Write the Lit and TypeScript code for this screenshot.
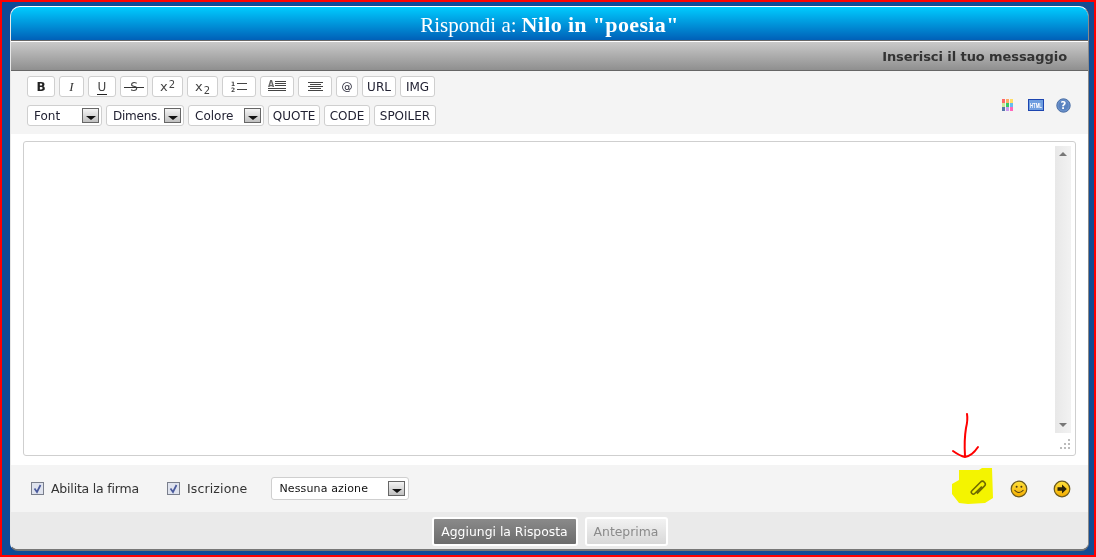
import { LitElement, html, css, svg } from "lit";
import { customElement } from "lit/decorators.js";

const tri = html`<span class="dd"><i></i></span>`;

const ico = (w: number, body: unknown) =>
  html`<svg width=${w} height="13" viewBox="0 0 ${w} 13">${body}</svg>`;

const row1 = [
  { w: 28, c: "b", t: "B" },
  { w: 25, c: "i", t: "I" },
  { w: 28, c: "u", t: html`<span class="ul">U</span>` },
  { w: 28, c: "s", t: html`<span class="st">S</span>` },
  { w: 31, c: "sc", t: html`<span>x<sup>2</sup></span>` },
  { w: 31, c: "sc", t: html`<span>x<sub>2</sub></span>` },
  {
    w: 34, c: "", t: ico(16, svg`<text x="0" y="6" font-size="6" font-weight="700" font-family="DejaVu Sans" fill="#444">1</text><text x="0" y="12" font-size="6" font-weight="700" font-family="DejaVu Sans" fill="#444">2</text><path d="M6 3.5h10M6 9.5h10" stroke="#444" fill="none"/>`),
  },
  {
    w: 34, c: "", t: ico(19, svg`<text x="0" y="7" font-size="8" font-weight="700" font-family="DejaVu Sans" fill="#666">A</text><path d="M7 1.5h11M7 3.5h11M7 5.5h11M0 8.5h18M0 10.5h18" stroke="#444" fill="none"/>`),
  },
  {
    w: 34, c: "", t: ico(15, svg`<path d="M0 2.5h15M2 4.5h11M0 6.5h15M2 8.5h11M0 10.5h15" stroke="#444" fill="none"/>`),
  },
  { w: 22, c: "at", t: "@" },
  { w: 34, c: "", t: "URL" },
  { w: 35, c: "", t: "IMG" },
];
const selects = [
  { w: 75, t: "Font", c: "" },
  { w: 78, t: "Dimens.", c: "tight" },
  { w: 76, t: "Colore", c: "" },
];
const row2 = [
  { w: 52, t: "QUOTE" },
  { w: 46, t: "CODE" },
  { w: 62, t: "SPOILER" },
];
const swatches = ["#f66", "#fa6", "#fd6", "#cdea9c", "#3c6", "#6be", "#57a", "#c9e", "#f6b"];

@customElement("app-root")
export class AppRoot extends LitElement {
  static styles = css`
    :host {
      display: block;
      width: 1096px;
      height: 557px;
      position: relative;
      overflow: hidden;
      box-sizing: border-box;
      border: 2px solid #f00;
      background: linear-gradient(90deg, #0f4a96, #10499a 50%, #134c92);
      padding: 4px 5px 4px 8px;
      font-family: "DejaVu Sans", Verdana, sans-serif;
      color: #222;
    }
    .panel {
      height: 545px;
      box-sizing: border-box;
      display: flex;
      flex-direction: column;
      border-radius: 10px 10px 8px 8px;
      overflow: hidden;
      border: 1px solid #fff;
      border-right-color: #8a8a8a;
      border-bottom: 2px solid #777;
      border-left-color: #e8e8e8;
      background: #fff;
    }
    .head {
      height: 33px;
      flex: none;
      box-sizing: border-box;
      display: flex;
      align-items: center;
      justify-content: center;
      gap: 5px;
      padding-top: 3px;
      background: linear-gradient(#00ccff, #0060b8);
      color: #fff;
      font-family: "Liberation Serif", serif;
      font-size: 21px;
      white-space: pre;
    }
    .head b {
      font-size: 22px;
      letter-spacing: 0.35px;
    }
    .sub {
      height: 31px;
      flex: none;
      box-sizing: border-box;
      border-top: 1px solid #666;
      border-bottom: 1px solid #666;
      box-shadow: inset 0 1px 0 #fff;
      background: linear-gradient(#cbcbcb, #8f8f8f);
      display: flex;
      align-items: center;
      justify-content: flex-end;
      padding: 2px 21px 0 0;
      font-size: 13px;
      font-weight: 700;
      letter-spacing: -0.08px;
      color: #333;
    }
    .tools {
      height: 63px;
      flex: none;
      box-sizing: border-box;
      background: #f4f4f4;
      padding: 5px 17px 0 16px;
      display: flex;
      justify-content: space-between;
    }
    .rows {
      display: flex;
      flex-direction: column;
      gap: 8px;
    }
    .row {
      display: flex;
      gap: 4px;
    }
    .btn {
      height: 21px;
      box-sizing: border-box;
      border: 1px solid #cfcfcf;
      border-radius: 3px;
      background: #fff;
      display: flex;
      align-items: center;
      justify-content: center;
      font-size: 12px;
      color: #223;
      line-height: 1;
      flex: none;
    }
    .btn.b { font-weight: 700; font-size: 12px; color: #222; }
    .btn.i { font-style: italic; font-family: "Liberation Serif", serif; font-size: 13px; color: #333; }
    .btn.at { font-size: 11px; }
    .btn.sc { font-size: 13px; color: #444; }
    .ul, .st {
      position: relative;
      display: block;
      color: #444;
    }
    .ul::after {
      content: "";
      position: absolute;
      left: -1px;
      right: -1px;
      bottom: -2px;
      border-top: 1px solid #222;
    }
    .st::after {
      content: "";
      position: absolute;
      left: -6px;
      right: -6px;
      top: 6px;
      border-top: 1px solid #333;
    }
    sup, sub { font-size: 10px; line-height: 0; margin-left: 1px; }
    sup { vertical-align: 3px; }
    sub { vertical-align: -3px; }
    .sel {
      justify-content: space-between;
      padding: 0 2px 0 6px;
    }
    .tight { letter-spacing: -0.25px; }
    .dd {
      width: 17px;
      height: 15px;
      box-sizing: border-box;
      border: 1px solid #666;
      background: linear-gradient(#f4f4f4, #c0c0c0);
      display: flex;
      align-items: flex-end;
      justify-content: center;
      padding-bottom: 2px;
      flex: none;
    }
    .dd i {
      width: 0;
      height: 0;
      border-left: 5px solid transparent;
      border-right: 5px solid transparent;
      border-top: 4px solid #111;
    }
    .side {
      display: flex;
      align-items: center;
      height: 14px;
      margin-top: 22px;
    }
    .grid {
      display: grid;
      grid-template-columns: repeat(3, 3.5px);
      grid-auto-rows: 3.5px;
      gap: 0.5px;
      margin-right: 15px;
    }
    .html { margin-right: 12px; overflow: visible; }
    .main {
      flex: 1;
      padding: 7px 12px 9px 12px;
      background: #fff;
      display: flex;
    }
    .area {
      flex: 1;
      border: 1px solid #cfcfcf;
      border-radius: 3px;
      display: flex;
      flex-direction: column;
      align-items: flex-end;
      padding: 4px 4px 2px 0;
      box-sizing: border-box;
    }
    .bar {
      width: 16px;
      height: 287px;
      background: linear-gradient(90deg, #e8e8e8, #f2f2f2);
      display: flex;
      flex-direction: column;
      justify-content: space-between;
      align-items: center;
      padding: 6px 0;
      box-sizing: border-box;
    }
    .up, .down {
      width: 0;
      height: 0;
      border-left: 4px solid transparent;
      border-right: 4px solid transparent;
    }
    .up { border-bottom: 4px solid #777; }
    .down { border-top: 4px solid #777; }
    .grip { margin-top: 5px; }
    .foot {
      height: 47px;
      flex: none;
      box-sizing: border-box;
      background: #f4f4f4;
      display: flex;
      align-items: center;
      padding: 0 17px 0 20px;
      font-size: 12.5px;
      color: #333;
    }
    .chk {
      width: 13px;
      height: 13px;
      margin-right: 7px;
      flex: none;
    }
    .l1 { margin-right: 28px; letter-spacing: -0.2px; }
    .l2 { margin-right: 24px; letter-spacing: 0.14px; }
    .action {
      width: 138px;
      height: 23px;
      padding: 0 3px 0 7px;
      font-size: 11px;
      color: #111;
      letter-spacing: 0.15px;
    }
    .acts {
      margin-left: auto;
      display: flex;
      align-items: center;
    }
    .clip { margin-right: 23px; }
    .smile { margin-right: 25px; }
    .bottom {
      height: 37px;
      flex: none;
      box-sizing: border-box;
      background: #eaeaea;
      display: flex;
      justify-content: center;
      align-items: flex-start;
      gap: 7px;
      padding-top: 5px;
    }
    .cta {
      height: 29px;
      box-sizing: border-box;
      border: 2px solid #fff;
      border-radius: 3px;
      display: flex;
      align-items: center;
      justify-content: center;
      font-size: 12.4px;
    }
    .go { width: 146px; background: linear-gradient(#8a8a8a, #6c6c6c); color: #fff; }
    .pre { width: 83px; background: linear-gradient(#f2f2f2, #d8d8d8); color: #8a8a8a; }
    .mark {
      position: absolute;
      left: -2px;
      top: -2px;
      pointer-events: none;
    }
    .blob {
      mix-blend-mode: multiply;
    }
  `;

  render() {
    return html`
      <div class="panel">
        <div class="head"><span>Rispondi a:</span><b>Nilo in "poesia"</b></div>
        <div class="sub">Inserisci il tuo messaggio</div>
        <div class="tools">
          <div class="rows">
            <div class="row">
              ${row1.map(
                (b) => html`<div class="btn ${b.c}" style="width:${b.w}px">${b.t}</div>`
              )}
            </div>
            <div class="row">
              ${selects.map(
                (s) => html`<div class="btn sel" style="width:${s.w}px"><span class=${s.c}>${s.t}</span>${tri}</div>`
              )}
              ${row2.map((b) => html`<div class="btn" style="width:${b.w}px">${b.t}</div>`)}
            </div>
          </div>
          <div class="side">
            <div class="grid">
              ${swatches.map((c) => html`<span style="background:${c}"></span>`)}
            </div>
            <svg class="html" width="16" height="12" viewBox="0 0 16 12">
              <rect x=".5" y=".5" width="15" height="11" fill="#6f9fe0" stroke="#1c45b0" />
              <text x="8" y="8.7" text-anchor="middle" font-size="6.5" font-weight="700" font-family="Liberation Sans" fill="#fff" textLength="12" lengthAdjust="spacingAndGlyphs">HTML</text>
            </svg>
            <svg width="15" height="15" viewBox="0 0 15 15">
              <circle cx="7.5" cy="7.5" r="6.7" fill="#6b92cc" stroke="#4a6ea4" />
              <circle cx="7.5" cy="7.5" r="5" fill="#5a83c0" />
              <text x="7.5" y="11" text-anchor="middle" font-size="10" font-weight="700" font-family="DejaVu Sans" fill="#fff">?</text>
            </svg>
          </div>
        </div>
        <div class="main">
          <div class="area">
            <div class="bar"><span class="up"></span><span class="down"></span></div>
            <svg class="grip" width="12" height="14" viewBox="0 0 12 14">
              <g fill="#bbb">
                <rect x="9" y="1" width="2" height="2" />
                <rect x="5" y="5" width="2" height="2" />
                <rect x="9" y="5" width="2" height="2" />
                <rect x="1" y="9" width="2" height="2" />
                <rect x="5" y="9" width="2" height="2" />
                <rect x="9" y="9" width="2" height="2" />
              </g>
            </svg>
          </div>
        </div>
        <div class="foot">
          <svg class="chk" viewBox="0 0 13 13">
            <rect x=".5" y=".5" width="12" height="12" fill="#dfe3ee" stroke="#7a7f8c" />
            <path d="M3.5 6.5 L6 10 L9.5 3" fill="none" stroke="#4a5a9c" stroke-width="1.7" />
          </svg>
          <span class="l1">Abilita la firma</span>
          <svg class="chk" viewBox="0 0 13 13">
            <rect x=".5" y=".5" width="12" height="12" fill="#dfe3ee" stroke="#7a7f8c" />
            <path d="M3.5 6.5 L6 10 L9.5 3" fill="none" stroke="#4a5a9c" stroke-width="1.7" />
          </svg>
          <span class="l2">Iscrizione</span>
          <div class="btn sel action"><span>Nessuna azione</span>${tri}</div>
          <div class="acts">
            <svg class="clip" width="18" height="18" viewBox="0 0 18 18">
              <g transform="rotate(-45 9 9)" fill="none" stroke="#6f6a10" stroke-width="1.6">
                <path d="M4 12 H14.5 a2.8 2.8 0 0 0 0 -5.6 H2.5 a2 2 0 0 0 0 4 H12.5" transform="translate(1 -.5)" />
              </g>
            </svg>
            <svg class="smile" width="18" height="18" viewBox="0 0 18 18">
              <defs>
                <linearGradient id="y" x1="0" y1="0" x2="0" y2="1">
                  <stop offset="0" stop-color="#ffe23c" />
                  <stop offset="1" stop-color="#f4ac00" />
                </linearGradient>
              </defs>
              <circle cx="9" cy="9" r="7.8" fill="url(#y)" stroke="#6b5a1e" stroke-width="1.2" />
              <circle cx="6.6" cy="6.8" r="1" fill="#4a3a10" />
              <circle cx="11.4" cy="6.8" r="1" fill="#4a3a10" />
              <path d="M4.5 10 Q9 15 13.5 10" fill="none" stroke="#4a3a10" stroke-width="1.1" />
            </svg>
            <svg width="18" height="18" viewBox="0 0 18 18">
              <circle cx="9" cy="9" r="7.8" fill="url(#y)" stroke="#6b5a1e" stroke-width="1.2" />
              <path d="M4.5 7.3 H9 V4.5 L13.8 9 L9 13.5 V10.7 H4.5 Z" fill="#2a2208" />
            </svg>
          </div>
        </div>
        <div class="bottom">
          <div class="cta go">Aggiungi la Risposta</div>
          <div class="cta pre">Anteprima</div>
        </div>
      </div>
      <svg class="mark" width="1096" height="557" viewBox="0 0 1096 557">
        <path class="blob" d="M959 470 L979 470 L982 468 L992 468 L993 498 L985 503 L968 504 L959 503 L952 494 L952 484 L959 480 Z" fill="#ffff00" />
        <path d="M967 414 Q968 420 966 428 Q964 440 965 456 M953 451 Q960 456 965 457 Q972 456 978 447" fill="none" stroke="#f00" stroke-width="2" stroke-linecap="round" />
      </svg>
    `;
  }
}
